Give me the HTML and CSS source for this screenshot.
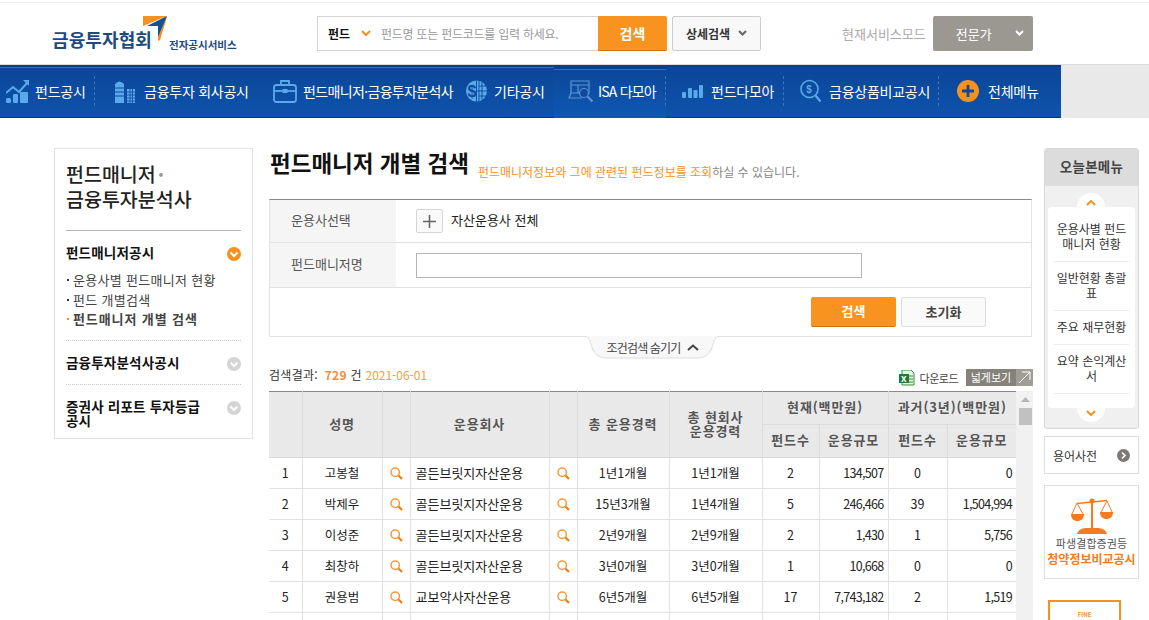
FILE: index.html
```html
<!DOCTYPE html>
<html lang="ko">
<head>
<meta charset="utf-8">
<title>펀드매니저 개별 검색</title>
<link rel="stylesheet" href="styles.css">
</head>
<body>
<header class="top">
  <div class="logo">
    <span class="logo-name">금융투자협회</span>
    <svg class="logo-mark" width="24" height="25" viewBox="0 0 24 25"><polygon points="0,0 24,0 0,10" fill="#f5921e"/><polygon points="15,9 15,25 17,24 24,1" fill="#f5921e"/><polygon points="24,0 4,10 15,10 15,21" fill="#14519b"/></svg>
    <span class="logo-sub">전자공시서비스</span>
  </div>
  <div class="search">
    <div class="search-box">
      <b class="search-kind">펀드</b>
      <svg class="chev" width="10" height="7" viewBox="0 0 10 7"><path d="M1 1l4 4 4-4" fill="none" stroke="#f5921e" stroke-width="2"/></svg>
      <span class="search-hint">펀드명 또는 펀드코드를 입력 하세요.</span>
    </div>
    <button class="btn-search">검색</button>
    <button class="btn-detail">상세검색
      <svg width="9" height="7" viewBox="0 0 9 7"><path d="M1 1l3.500 3.500L8 1" fill="none" stroke="#666" stroke-width="2"/></svg>
    </button>
  </div>
  <span class="mode-label">현재서비스모드</span>
  <div class="mode"><span>전문가</span>
    <svg width="9" height="7" viewBox="0 0 9 7"><path d="M1 1l3.500 3.500L8 1" fill="none" stroke="#fff" stroke-width="2"/></svg>
  </div>
</header>

<nav class="nav">
  <div class="nav-main">
    <a class="nav-item n1 sep lit">
      <svg width="23" height="24" viewBox="0 0 23 24" fill="#5aa9ea"><rect x="0" y="19" width="5" height="5" rx="1.500"/><rect x="7" y="15" width="5" height="9" rx="1"/><rect x="14" y="13" width="8" height="11" rx="1"/><path d="M0 14l7-6 6 5 8-9" fill="none" stroke="#5aa9ea" stroke-width="2"/><path d="M17 1h6v6z"/></svg>
      <span>펀드공시</span></a>
    <a class="nav-item n2 lit">
      <svg width="21" height="24" viewBox="0 0 21 24" fill="#5aa9ea"><path d="M1 5q4-5 9 0v19H1z"/><path d="M1 9h9M1 13h9M1 17h9" stroke="#0d4a9e" stroke-width="1.200"/><path d="M13 10h8v14h-8z"/><path d="M13 13h8M13 16h8M13 19h8M13 22h8M16 10v14M18.500 10v14" stroke="#0d4a9e" stroke-width=".8"/></svg>
      <span>금융투자 회사공시</span></a>
    <a class="nav-item n3 lit">
      <svg width="24" height="24" viewBox="0 0 24 24" fill="none" stroke="#5aa9ea" stroke-width="1.800"><rect x="1" y="6" width="22" height="17" rx="2.500"/><path d="M8 6V2h8v4"/><path d="M1 12h22"/><rect x="9.500" y="10" width="5" height="4" fill="#5aa9ea" stroke="none"/></svg>
      <span class="tight">펀드매니저·금융투자분석사</span></a>
    <a class="nav-item n4 lit">
      <svg width="21" height="24" viewBox="0 0 21 24"><circle cx="10.500" cy="12" r="10.500" fill="#5aa9ea"/><path d="M10.500 1.500v21M13 2v20M16 3.500v17M13 7h8M11 12h10M13 17h8" stroke="#0d4a9e" stroke-width=".9"/><text x="1.500" y="18" class="globe-d">$</text></svg>
      <span>기타공시</span></a>
    <a class="nav-item n5 sep active">
      <svg width="26" height="24" viewBox="0 0 26 24" fill="none" stroke="#5e93d4" stroke-width="1.200"><path d="M3 2h18v12H3zM3 6h18M10 6v8"/><path d="M3 14l-2 5h13"/><circle cx="16" cy="14" r="4.500" fill="#0d4a9e"/><path d="M19.500 17.500l5 5" stroke-width="2.200"/></svg>
      <span class="isa">ISA 다모아</span></a>
    <a class="nav-item n6 sep">
      <svg width="21" height="14" viewBox="0 0 21 14" fill="#5aa9ea"><rect y="8" width="4" height="6" rx="1"/><rect x="6" y="4" width="4" height="10" rx="1"/><rect x="11.500" y="6" width="4" height="8" rx="1"/><rect x="17" y="1" width="4" height="13" rx="1"/></svg>
      <span>펀드다모아</span></a>
    <a class="nav-item n7 sep">
      <svg width="22" height="24" viewBox="0 0 22 24" fill="none" stroke="#5aa9ea" stroke-width="1.600"><circle cx="9.500" cy="10" r="8.500"/><path d="M15.500 16.500l5 6" stroke-width="2.200"/><text x="6.300" y="14" class="dollar">$</text></svg>
      <span>금융상품비교공시</span></a>
    <a class="nav-item n8">
      <svg width="22" height="22" viewBox="0 0 22 22"><circle cx="11" cy="11" r="11" fill="#f5921e"/><path d="M11 5v12M5 11h12" stroke="#0d4a9e" stroke-width="2.800"/></svg>
      <span>전체메뉴</span></a>
  </div>
</nav>

<main class="page">
  <aside class="side">
    <h2 class="side-title">펀드매니저<i class="dot">·</i><br>금융투자분석사</h2>
    <section class="side-group first">
      <div class="side-head"><b>펀드매니저공시</b>
        <svg width="14" height="14" viewBox="0 0 14 14"><circle cx="7" cy="7" r="7" fill="#f5921e"/><path d="M3.500 5.500L7 9l3.500-3.500" fill="none" stroke="#fff" stroke-width="2"/></svg>
      </div>
      <ul class="side-list">
        <li>운용사별 펀드매니저 현황</li>
        <li>펀드 개별검색</li>
        <li class="on">펀드매니저 개별 검색</li>
      </ul>
    </section>
    <section class="side-group">
      <div class="side-head"><b>금융투자분석사공시</b>
        <svg width="14" height="14" viewBox="0 0 14 14"><circle cx="7" cy="7" r="7" fill="#d4d4d4"/><path d="M3.500 5.500L7 9l3.500-3.500" fill="none" stroke="#fff" stroke-width="2"/></svg>
      </div>
    </section>
    <section class="side-group">
      <div class="side-head"><b class="wrap">증권사 리포트 투자등급 공시</b>
        <svg width="14" height="14" viewBox="0 0 14 14"><circle cx="7" cy="7" r="7" fill="#d4d4d4"/><path d="M3.500 5.500L7 9l3.500-3.500" fill="none" stroke="#fff" stroke-width="2"/></svg>
      </div>
    </section>
  </aside>

  <section class="content">
    <div class="title-row">
      <h1>펀드매니저 개별 검색</h1>
      <p><em>펀드매니저정보와 그에 관련된 펀드정보를 조회</em>하실 수 있습니다.</p>
    </div>
    <div class="form">
      <div class="form-row r1">
        <div class="form-label">운용사선택</div>
        <div class="form-value"><button class="plus"><svg width="13" height="13" viewBox="0 0 13 13"><path d="M6.500 0v13M0 6.500h13" stroke="#666" stroke-width="1.600"/></svg></button><span class="value-text">자산운용사 전체</span></div>
      </div>
      <div class="form-row r2">
        <div class="form-label">펀드매니저명</div>
        <div class="form-value"><input class="field" type="text"></div>
      </div>
      <div class="form-actions">
        <button class="act act-go">검색</button>
        <button class="act act-reset">초기화</button>
      </div>
    </div>
    <div class="tab-wrap">
      <div class="tab">
        <svg class="tab-bg" width="136" height="23" viewBox="0 0 136 23"><path d="M0 0c7 1 6 8 9 14 3 5 7 8 14 8h90c7 0 11-3 14-8 3-6 2-13 9-14" fill="#f8f8f8" stroke="#ddd"/></svg>
        <span class="tab-text">조건검색 숨기기</span>
        <svg class="tab-chev" width="12" height="7" viewBox="0 0 12 7"><path d="M1 6l5-4.500L11 6" fill="none" stroke="#444" stroke-width="2"/></svg>
      </div>
    </div>
    <div class="result">
      <div class="result-count">검색결과: <b>729</b> 건 <em>2021-06-01</em></div>
      <div class="tools">
        <svg width="16" height="16" viewBox="0 0 16 16"><path d="M3 0h9l3 3v12H3z" fill="#e8f3e4" stroke="#3d8b3d"/><rect x="0" y="4" width="10" height="9" fill="#1f7a35"/><text x="2" y="12" class="xl">x</text><path d="M10 6h4M10 9h4M10 12h4" stroke="#3d8b3d"/></svg>
        <span class="dl">다운로드</span>
        <span class="wide">넓게보기</span>
        <span class="wide-ico"><svg width="13" height="13" viewBox="0 0 13 13"><path d="M1 12L12 1M4 1h8v8" fill="none" stroke="#fff"/></svg></span>
      </div>
    </div>
    <div class="grid-wrap">
      <table class="grid">
        <colgroup>
          <col class="c33"><col class="c80"><col class="c28"><col class="c139"><col class="c28"><col class="c92"><col class="c93"><col class="c57"><col class="c69"><col class="c59"><col class="c69">
        </colgroup>
        <thead>
          <tr class="h1">
            <th rowspan="2"></th><th rowspan="2">성명</th><th rowspan="2"></th><th rowspan="2">운용회사</th><th rowspan="2"></th><th rowspan="2">총 운용경력</th><th rowspan="2">총 현회사<br>운용경력</th><th colspan="2">현재(백만원)</th><th colspan="2">과거(3년)(백만원)</th>
          </tr>
          <tr class="h2"><th>펀드수</th><th>운용규모</th><th>펀드수</th><th>운용규모</th></tr>
        </thead>
        <tbody>
          <tr><td>1</td><td>고봉철</td><td><svg class="mag" width="13" height="13" viewBox="0 0 13 13"><circle cx="5.200" cy="5.200" r="4.200" fill="none" stroke="#f59a3c" stroke-width="1.500"/><path d="M8.500 8.500l3.500 3.500" stroke="#f07f10" stroke-width="2.200"/></svg></td><td class="l">골든브릿지자산운용</td><td><svg class="mag" width="13" height="13" viewBox="0 0 13 13"><circle cx="5.200" cy="5.200" r="4.200" fill="none" stroke="#f59a3c" stroke-width="1.500"/><path d="M8.500 8.500l3.500 3.500" stroke="#f07f10" stroke-width="2.200"/></svg></td><td>1년1개월</td><td>1년1개월</td><td>2</td><td class="r">134,507</td><td>0</td><td class="r">0</td></tr>
          <tr><td>2</td><td>박제우</td><td><svg class="mag" width="13" height="13" viewBox="0 0 13 13"><circle cx="5.200" cy="5.200" r="4.200" fill="none" stroke="#f59a3c" stroke-width="1.500"/><path d="M8.500 8.500l3.500 3.500" stroke="#f07f10" stroke-width="2.200"/></svg></td><td class="l">골든브릿지자산운용</td><td><svg class="mag" width="13" height="13" viewBox="0 0 13 13"><circle cx="5.200" cy="5.200" r="4.200" fill="none" stroke="#f59a3c" stroke-width="1.500"/><path d="M8.500 8.500l3.500 3.500" stroke="#f07f10" stroke-width="2.200"/></svg></td><td>15년3개월</td><td>1년4개월</td><td>5</td><td class="r">246,466</td><td>39</td><td class="r">1,504,994</td></tr>
          <tr><td>3</td><td>이성준</td><td><svg class="mag" width="13" height="13" viewBox="0 0 13 13"><circle cx="5.200" cy="5.200" r="4.200" fill="none" stroke="#f59a3c" stroke-width="1.500"/><path d="M8.500 8.500l3.500 3.500" stroke="#f07f10" stroke-width="2.200"/></svg></td><td class="l">골든브릿지자산운용</td><td><svg class="mag" width="13" height="13" viewBox="0 0 13 13"><circle cx="5.200" cy="5.200" r="4.200" fill="none" stroke="#f59a3c" stroke-width="1.500"/><path d="M8.500 8.500l3.500 3.500" stroke="#f07f10" stroke-width="2.200"/></svg></td><td>2년9개월</td><td>2년9개월</td><td>2</td><td class="r">1,430</td><td>1</td><td class="r">5,756</td></tr>
          <tr><td>4</td><td>최창하</td><td><svg class="mag" width="13" height="13" viewBox="0 0 13 13"><circle cx="5.200" cy="5.200" r="4.200" fill="none" stroke="#f59a3c" stroke-width="1.500"/><path d="M8.500 8.500l3.500 3.500" stroke="#f07f10" stroke-width="2.200"/></svg></td><td class="l">골든브릿지자산운용</td><td><svg class="mag" width="13" height="13" viewBox="0 0 13 13"><circle cx="5.200" cy="5.200" r="4.200" fill="none" stroke="#f59a3c" stroke-width="1.500"/><path d="M8.500 8.500l3.500 3.500" stroke="#f07f10" stroke-width="2.200"/></svg></td><td>3년0개월</td><td>3년0개월</td><td>1</td><td class="r">10,668</td><td>0</td><td class="r">0</td></tr>
          <tr><td>5</td><td>권용범</td><td><svg class="mag" width="13" height="13" viewBox="0 0 13 13"><circle cx="5.200" cy="5.200" r="4.200" fill="none" stroke="#f59a3c" stroke-width="1.500"/><path d="M8.500 8.500l3.500 3.500" stroke="#f07f10" stroke-width="2.200"/></svg></td><td class="l">교보악사자산운용</td><td><svg class="mag" width="13" height="13" viewBox="0 0 13 13"><circle cx="5.200" cy="5.200" r="4.200" fill="none" stroke="#f59a3c" stroke-width="1.500"/><path d="M8.500 8.500l3.500 3.500" stroke="#f07f10" stroke-width="2.200"/></svg></td><td>6년5개월</td><td>6년5개월</td><td>17</td><td class="r">7,743,182</td><td>2</td><td class="r">1,519</td></tr>
          <tr><td></td><td></td><td></td><td></td><td></td><td></td><td></td><td></td><td></td><td></td><td></td></tr>
        </tbody>
      </table>
      <div class="scroll">
        <svg class="scroll-up" width="9" height="5" viewBox="0 0 9 5"><path d="M4.500 0L9 5H0z" fill="#b5b5b5"/></svg>
        <div class="scroll-thumb"></div>
      </div>
    </div>
  </section>

  <aside class="right">
    <div class="today">
      <div class="today-head">오늘본메뉴</div>
      <div class="today-body">
        <div class="bump bump-up"><svg width="10" height="6" viewBox="0 0 10 6"><path d="M1 5l4-4 4 4" fill="none" stroke="#f5921e" stroke-width="2"/></svg></div>
        <ul class="today-list">
          <li>운용사별 펀드매니저 현황</li>
          <li>일반현황 총괄표</li>
          <li>주요 재무현황</li>
          <li>요약 손익계산서</li>
        </ul>
        <div class="bump bump-down"><svg width="10" height="6" viewBox="0 0 10 6"><path d="M1 1l4 4 4-4" fill="none" stroke="#f5921e" stroke-width="2"/></svg></div>
      </div>
    </div>
    <div class="dict"><span>용어사전</span>
      <svg width="13" height="13" viewBox="0 0 13 13"><circle cx="6.500" cy="6.500" r="6.500" fill="#7d7a75"/><path d="M5 3.500l3 3-3 3" fill="none" stroke="#fff" stroke-width="1.700"/></svg>
    </div>
    <div class="promo">
      <svg width="42" height="37" viewBox="0 0 42 37" fill="#f47b20"><circle cx="21" cy="4" r="2.500"/><path d="M20 4h2v28h-2z"/><path d="M6 6.500l30-3" stroke="#f47b20" stroke-width="1.500"/><path d="M6 6L1 17M6 6l6 11M36 4l-6 11M36 4l5 11" fill="none" stroke="#f47b20"/><path d="M0 17h13c0 5-3 7-6.500 7S0 22 0 17zM29 15h13c0 5-3 7-6.500 7S29 20 29 15z"/><path d="M6 37c1-4 5-6 10-6h10c5 0 9 2 10 6z"/></svg>
      <span class="promo-a">파생결합증권등</span>
      <b class="promo-b">청약정보비교공시</b>
    </div>
    <div class="fine"><span>FINE</span></div>
  </aside>
</main>
</body>
</html>
```

FILE: styles.css
```css
* { box-sizing: border-box; }
html, body { margin: 0; padding: 0; height: 620px; overflow: hidden; background: #fff; }
body { font-family: "Noto Sans CJK KR", "Noto Sans", sans-serif; font-size: 13px; color: #333; }
ul { list-style: none; margin: 0; padding: 0; }
h1, h2, p { margin: 0; }
em, i { font-style: normal; }
button { font-family: inherit; cursor: pointer; padding: 0; }

.top { height: 64px; border-top: 1px solid #eee; margin-top: 2px; display: flex; align-items: flex-start; padding-top: 13px; margin-bottom: -2px; }
.logo { width: 317px; height: 36px; padding-left: 52px; display: flex; align-items: flex-start; }
.logo-name { font-size: 18px; font-weight: 700; color: #1c4a82; line-height: 24px; margin-top: 11px; width: 91px; white-space: nowrap; letter-spacing: .1px; }
.logo-mark { flex: none; }
.logo-sub { font-size: 10.500px; font-weight: 700; color: #1c4a82; line-height: 14px; margin: 22px 0 0 2px; white-space: nowrap; }
.search { display: flex; align-items: stretch; height: 35px; width: 444px; }
.search-box { width: 281px; border: 1px solid #d4d4d4; border-right: 0; display: flex; align-items: center; padding-left: 10px; }
.search-kind { font-size: 12px; color: #111; width: 33px; }
.chev { margin-right: 10px; }
.search-hint { color: #999; font-size: 12px; white-space: nowrap; letter-spacing: -.25px; }
.btn-search { width: 69px; background: #f7931e; border: 0; border-bottom: 1px solid #d2730c; border-radius: 0 2px 2px 0; color: #fff; font-size: 14px; font-weight: 700; }
.btn-detail { width: 89px; margin-left: 5px; background: #f8f8f8; border: 1px solid #ccc; border-radius: 2px; font-size: 12px; font-weight: 700; color: #333; display: flex; align-items: center; justify-content: center; gap: 8px; }
.mode-label { color: #aaa; margin-left: 81px; line-height: 35px; white-space: nowrap; }
.mode { width: 100px; height: 35px; margin-left: 7px; background: #9b9892; border-radius: 2px; color: #fff; display: flex; align-items: center; padding: 0 9px 0 23px; justify-content: space-between; }

.nav { height: 54px; background: #e9e9e9; border-top: 1px solid #ddd; }
.nav-main { width: 1061px; height: 53px; background: linear-gradient(#0c4697, #0d53ad); border-top: 2px solid #0a3f8e; border-bottom: 1px solid #08357c; display: grid; grid-template-columns: 95px 170px 195px 94px 112px 118px 155px 122px; }
.nav-item { display: flex; align-items: center; color: #fff; font-size: 14px; white-space: nowrap; height: 50px; padding-bottom: 3px; position: relative; letter-spacing: -.25px; }
.nav-item.sep::after { content: ""; position: absolute; right: 0; top: 9px; height: 30px; border-right: 1px dashed #3f72b8; }
.lit { box-shadow: inset 0 1px #3a6bb3; }
.active { box-shadow: inset 0 2px #0a3f8e, inset 0 3px #3a6bb3; height: 51px; background: linear-gradient(#0c4697, #0e58b4); }
.n1 { padding-left: 6px; gap: 6px; }
.n2 { padding-left: 19px; gap: 9px; }
.n3 { padding-left: 8px; gap: 6px; }
.n4 { padding-left: 6px; gap: 7px; }
.n5 { padding-left: 14px; gap: 4px; }
.n6 { padding-left: 16px; gap: 8px; }
.n7 { padding-left: 16px; gap: 7px; }
.n8 { padding-left: 18px; gap: 9px; }
.tight { letter-spacing: -.65px; }
.isa { letter-spacing: -.8px; }
.globe-d { font: 700 16px "Liberation Sans", sans-serif; fill: #0d4a9e; }
.dollar { font: 700 10px "Liberation Sans", sans-serif; fill: #5aa9ea; stroke: none; }
.xl { font: 700 10px "Liberation Sans", sans-serif; fill: #fff; }

.page { display: flex; align-items: flex-start; padding: 30px 0 0 54px; }
.side { width: 199px; height: 291px; border: 1px solid #e2e2e2; padding: 11px 11px 0 11px; flex: none; }
.side-title { font-size: 19.500px; font-weight: 500; line-height: 25px; color: #222; padding: 1px 0 19px; border-bottom: 1px solid #b5b5b5; white-space: nowrap; }
.dot { color: #999; margin-left: 2px; font-weight: 700; }
.side-group { border-top: 1px dotted #ccc; padding: 14px 0 13px; }
.side-group.first { border-top: 0; padding: 14px 0 11px; }
.side-head { display: flex; justify-content: space-between; align-items: flex-start; color: #111; font-size: 13.500px; line-height: 14px; gap: 10px; }
.side-head b { letter-spacing: .2px; }
.side-head b.wrap { max-width: 145px; }
.side-head svg { flex: none; margin-top: 2px; }
.side-list { margin-top: 9px; color: #444; letter-spacing: .3px; }
.side-list li { line-height: 19.500px; padding-left: 7px; position: relative; white-space: nowrap; }
.side-list li::before { content: ""; position: absolute; left: 1px; top: 9px; width: 2px; height: 2px; background: #333; }
.side-list .on { font-weight: 700; color: #444; letter-spacing: .9px; }
.side-list .on::before { background: #f5921e; }

.content { width: 764px; margin-left: 16px; flex: none; }
.title-row { display: flex; align-items: flex-end; height: 51px; padding: 0 0 22px 1px; gap: 9px; }
.title-row h1 { font-size: 22.500px; font-weight: 700; color: #111; line-height: 30px; white-space: nowrap; }
.title-row p { font-size: 12px; color: #888; line-height: 16px; white-space: nowrap; margin-bottom: -3px; }
.title-row em { color: #f5921e; }
.form { width: 763px; height: 138px; border: 1px solid #e2e2e2; border-top: 1px solid #888; }
.form-row { display: flex; border-bottom: 1px solid #e2e2e2; }
.r1 { height: 43px; }
.r2 { height: 45px; }
.form-label { width: 126px; background: #f5f5f5; padding: 0 0 3px 21px; color: #555; display: flex; align-items: center; }
.form-value { padding-left: 20px; display: flex; align-items: center; color: #222; }
.value-text { margin-bottom: 3px; }
.plus { width: 27px; height: 24px; background: #fafafa; border: 1px solid #d5d5d5; border-radius: 2px; display: flex; align-items: center; justify-content: center; margin-right: 8px; }
.field { width: 446px; height: 25px; border: 1px solid #b5b5b5; background: #fff; padding: 0; }
.form-actions { display: flex; justify-content: flex-end; gap: 5px; padding: 9px 45px 0 0; }
.act { width: 85px; height: 30px; border-radius: 2px; font-size: 13px; font-weight: 700; padding-bottom: 2px; }
.act-go { background: #f7931e; border: 0; border-bottom: 1px solid #d2730c; color: #fff; }
.act-reset { background: #fafafa; border: 1px solid #ddd; color: #444; }
.tab-wrap { height: 22px; display: flex; padding-left: 315px; }
.tab { width: 136px; height: 23px; position: relative; display: flex; align-items: center; justify-content: center; gap: 7px; color: #444; padding: 0 0 2px 2px; }
.tab-bg { position: absolute; left: 0; top: -1px; }
.tab-text { position: relative; font-size: 12px; letter-spacing: -.85px; white-space: nowrap; }
.tab-chev { position: relative; }
.result { display: flex; justify-content: space-between; align-items: center; height: 32px; padding-top: 5px; }
.result-count { color: #333; font-size: 12px; margin-bottom: 6px; letter-spacing: .3px; }
.result-count b { color: #f58b3c; margin-left: 3px; }
.result-count em { color: #f5a03c; letter-spacing: 0; }
.tools { display: flex; align-items: center; height: 17px; }
.dl { margin: 0 8px 0 5px; font-size: 11px; letter-spacing: -.5px; color: #444; white-space: nowrap; }
.wide { width: 50px; height: 17px; background: #85827c; color: #fff; font-size: 11px; line-height: 16px; text-align: center; white-space: nowrap; }
.wide-ico { width: 17px; height: 17px; background: #a09d97; display: flex; align-items: center; justify-content: center; }

.grid-wrap { display: flex; align-items: flex-start; }
.grid { width: 747px; table-layout: fixed; border-collapse: collapse; border-top: 1px solid #888; flex: none; }
.c33 { width: 33px; } .c80 { width: 80px; } .c28 { width: 28px; } .c139 { width: 139px; } .c92 { width: 92px; }
.c93 { width: 93px; } .c57 { width: 57px; } .c69 { width: 69px; } .c59 { width: 59px; }
.grid th { background: #e9e9e9; border: 1px solid #dcdcdc; border-top: 0; color: #555; font-size: 13px; font-weight: 700; line-height: 14px; padding: 0 0 2px; letter-spacing: .9px; white-space: nowrap; }
.grid .h1 { height: 33px; }
.grid .h2 { height: 33px; }
.grid td { height: 31px; border: 1px solid #e2e2e2; text-align: center; padding: 0 0 2px; color: #222; font-size: 12.500px; white-space: nowrap; }
.grid th:first-child, .grid td:first-child { border-left: 0; }
.grid th:last-child, .grid td:last-child { border-right: 0; }
.grid td.l { text-align: left; padding-left: 5px; font-size: 13px; }
.grid td.r { text-align: right; padding-right: 4px; letter-spacing: -.7px; }
.mag { display: block; margin: 2px auto 0; }
.scroll { width: 17px; height: 229px; background: #f1f1f1; display: flex; flex-direction: column; align-items: center; padding: 6px 0 0 2px; }
.scroll-up { display: block; }
.scroll-thumb { width: 13px; height: 17px; background: #c1c1c1; margin-top: 6px; }

.right { width: 95px; margin-left: 11px; flex: none; display: flex; flex-direction: column; }
.today { height: 281px; border: 1px solid #d8d8d8; border-radius: 3px; background: #f0f0f0; display: flex; flex-direction: column; }
.today-head { height: 37px; background: #dcdcdc; text-align: center; font-weight: 700; color: #444; line-height: 35px; font-size: 13.500px; letter-spacing: .3px; }
.today-body { position: relative; margin: 21px 3px 0; height: 201px; background: #fff; border-radius: 4px; padding: 0 6px; }
.bump { position: absolute; left: 29px; width: 28px; height: 14px; background: #fff; display: flex; justify-content: center; }
.bump-up { top: -14px; border-radius: 14px 14px 0 0; padding-top: 7px; }
.bump-down { bottom: -14px; border-radius: 0 0 14px 14px; padding-top: 2px; }
.today-list { font-size: 12px; text-align: center; line-height: 15px; color: #333; padding-top: 6px; }
.today-list li { border-bottom: 1px solid #ececec; padding: 8px 0 10px; }
.dict { height: 38px; margin-top: 7px; border: 1px solid #ddd; display: flex; align-items: center; justify-content: space-between; padding: 0 8px; font-size: 12px; color: #333; }
.promo { height: 94px; margin-top: 11px; border: 1px solid #ddd; display: flex; flex-direction: column; align-items: center; padding-top: 11px; }
.promo-a { font-size: 11px; color: #555; line-height: 15px; margin-top: 2px; white-space: nowrap; letter-spacing: .1px; }
.promo-b { font-size: 12px; color: #f47b20; line-height: 16px; white-space: nowrap; }
.fine { width: 73px; height: 60px; margin: 21px 0 0 4px; border: 2px solid #f5921e; text-align: center; }
.fine span { font-size: 6px; color: #f5921e; font-weight: 700; line-height: 26px; display: block; }
```
